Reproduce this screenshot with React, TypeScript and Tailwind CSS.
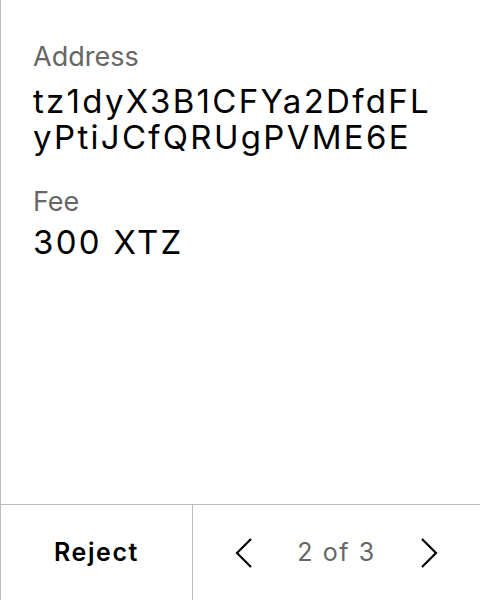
import React from "react";

const ChevronLeft = () => (
  <svg width="17" height="30" viewBox="0 0 17 30" fill="none">
    <path d="M16 1 L2 15 L16 29" stroke="black" strokeWidth="2.2" strokeLinejoin="miter" />
  </svg>
);

const ChevronRight = () => (
  <svg width="17" height="30" viewBox="0 0 17 30" fill="none">
    <path d="M1 1 L15 15 L1 29" stroke="black" strokeWidth="2.2" strokeLinejoin="miter" />
  </svg>
);

export default function App() {
  return (
    <div
      className="w-[480px] h-[600px] bg-white flex flex-col border-l border-[#bbbbbb]"
      style={{ fontFamily: "Inter, 'Noto Sans', sans-serif" }}
    >
      <div className="flex-1 flex flex-col px-[32px] pt-[41px]">
        <span className="text-[27px] leading-[32px] text-[#666666]">Address</span>
        <span className="mt-[10px] text-[33px] leading-[36px] tracking-[2.3px] text-black break-all">
          tz1dyX3B1CFYa2DfdFLyPtiJCfQRUgPVME6E
        </span>
        <span className="mt-[31px] text-[27px] leading-[32px] text-[#666666]">Fee</span>
        <span className="mt-[6px] text-[33px] leading-[36px] tracking-[2.3px] text-black">300 XTZ</span>
      </div>
      <div className="h-[96px] flex border-t border-[#bbbbbb]">
        <button className="w-[192px] flex items-center justify-center text-[25px] font-semibold tracking-[1.6px] text-black border-r border-[#bbbbbb]">
          Reject
        </button>
        <div className="flex-1 flex items-center justify-between pl-[42px] pr-[42px]">
          <ChevronLeft />
          <span className="text-[25px] tracking-[1.6px] text-[#666666]">2 of 3</span>
          <ChevronRight />
        </div>
      </div>
    </div>
  );
}
